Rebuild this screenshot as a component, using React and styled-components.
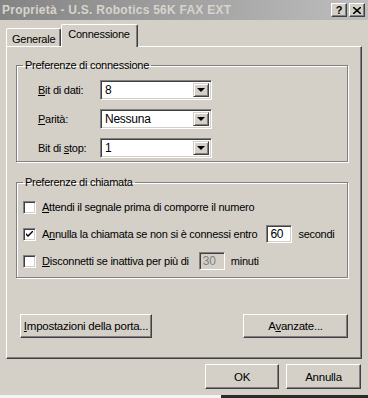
import React from "react";
import styled, { createGlobalStyle } from "styled-components";

const GlobalStyle = createGlobalStyle`
  html, body {
    margin: 0;
    padding: 0;
    background: #d4d0c8;
  }
  body {
    font-family: "Liberation Sans", Arial, sans-serif;
    font-size: 11px;
    letter-spacing: -0.25px;
    color: #000;
  }
`;

const Window = styled.div`
  width: 368px;
  height: 398px;
  display: flex;
  flex-direction: column;
  background: #d4d0c8;
  overflow: hidden;
`;

const TitleBar = styled.div`
  height: 20px;
  flex-shrink: 0;
  display: flex;
  align-items: center;
  justify-content: space-between;
  padding: 0 3px 0 2px;
  background: linear-gradient(to right, #848484, #bebebe);
`;

const Title = styled.span`
  font-weight: bold;
  font-size: 12px;
  letter-spacing: 0.25px;
  color: #d8d4cc;
`;

const TitleButtons = styled.div`
  display: flex;
  gap: 2px;
`;

const TitleButton = styled.div`
  width: 16px;
  height: 14px;
  box-sizing: border-box;
  background: #d4d0c8;
  border-top: 1px solid #fff;
  border-left: 1px solid #fff;
  border-right: 1px solid #404040;
  border-bottom: 1px solid #404040;
  box-shadow: inset -1px -1px 0 #808080;
  display: flex;
  align-items: center;
  justify-content: center;
  font-weight: bold;
  font-size: 11px;
  line-height: 1;
`;

const TabStrip = styled.div`
  display: flex;
  align-items: flex-end;
  height: 22px;
  padding: 4px 0 0 6px;
  flex-shrink: 0;
`;

const Tab = styled.div`
  position: relative;
  z-index: ${(p) => (p.$active ? 2 : 1)};
  height: ${(p) => (p.$active ? "23px" : "18px")};
  margin-bottom: ${(p) => (p.$active ? "-1px" : "0")};
  box-sizing: border-box;
  padding: ${(p) => (p.$active ? "2px 7px 0 6px" : "3px 5px 0 5px")};
  background: #d4d0c8;
  border-top: 1px solid #fff;
  border-left: 1px solid #fff;
  border-right: 1px solid #404040;
  border-top-left-radius: 2px;
  border-top-right-radius: 2px;
  box-shadow: inset -1px 0 0 #808080;
  line-height: 14px;
`;

const Panel = styled.div`
  margin: 0 6px;
  height: 313px;
  box-sizing: border-box;
  flex-shrink: 0;
  border-top: 1px solid #fff;
  border-left: 1px solid #fff;
  border-right: 1px solid #404040;
  border-bottom: 1px solid #404040;
  box-shadow: inset -1px -1px 0 #808080;
  padding: 11px 13px 0 9px;
  display: flex;
  flex-direction: column;
`;

const Group = styled.fieldset`
  margin: 0 0 ${(p) => p.$gap || 0}px 0;
  padding: ${(p) => p.$pad};
  height: ${(p) => p.$h}px;
  box-sizing: border-box;
  border: 1px solid #808080;
  box-shadow: 1px 1px 0 #fff, inset 1px 1px 0 #fff;
  min-width: 0;
`;

const Legend = styled.legend`
  margin-left: 6px;
  padding: 0 2px;
  line-height: 14px;
`;

const FieldGrid = styled.div`
  display: grid;
  grid-template-columns: 62px 112px;
  row-gap: 9px;
  align-items: center;
  padding-left: 21px;
`;

const Label = styled.span`
  white-space: nowrap;
`;

const Combo = styled.div`
  height: 20px;
  box-sizing: border-box;
  display: flex;
  background: #fff;
  border-top: 1px solid #808080;
  border-left: 1px solid #808080;
  border-right: 1px solid #fff;
  border-bottom: 1px solid #fff;
  box-shadow: inset 1px 1px 0 #404040, inset -1px -1px 0 #d4d0c8;
  padding: 2px;
`;

const ComboText = styled.span`
  flex: 1;
  padding-left: 2px;
  line-height: 14px;
  font-size: 12px;
`;

const ArrowButton = styled.div`
  width: 16px;
  box-sizing: border-box;
  background: #d4d0c8;
  border-top: 1px solid #d4d0c8;
  border-left: 1px solid #d4d0c8;
  border-right: 1px solid #404040;
  border-bottom: 1px solid #404040;
  box-shadow: inset 1px 1px 0 #fff, inset -1px -1px 0 #808080;
  display: flex;
  align-items: center;
  justify-content: center;
`;

const Triangle = styled.span`
  width: 0;
  height: 0;
  border-left: 4px solid transparent;
  border-right: 4px solid transparent;
  border-top: 4px solid #000;
`;

const CheckList = styled.div`
  display: flex;
  flex-direction: column;
  gap: 9px;
  padding-left: 6px;
`;

const CheckRow = styled.div`
  display: flex;
  align-items: center;
  height: 18px;
  white-space: nowrap;
`;

const Box = styled.span`
  width: 13px;
  height: 13px;
  box-sizing: border-box;
  flex-shrink: 0;
  background: #fff;
  border-top: 1px solid #808080;
  border-left: 1px solid #808080;
  border-right: 1px solid #fff;
  border-bottom: 1px solid #fff;
  box-shadow: inset 1px 1px 0 #404040, inset -1px -1px 0 #d4d0c8;
  display: flex;
  align-items: center;
  justify-content: center;
  margin-right: 6px;
`;

const SmallEdit = styled.span`
  width: 26px;
  height: 18px;
  box-sizing: border-box;
  margin: 0 6px 0 ${(p) => p.$ml}px;
  background: ${(p) => (p.$disabled ? "#d4d0c8" : "#fff")};
  color: ${(p) => (p.$disabled ? "#808080" : "#000")};
  border-top: 1px solid #808080;
  border-left: 1px solid #808080;
  border-right: 1px solid #fff;
  border-bottom: 1px solid #fff;
  box-shadow: inset 1px 1px 0 #404040, inset -1px -1px 0 #d4d0c8;
  padding: 1px 0 0 3px;
  line-height: 15px;
  font-size: 12px;
`;

const ButtonRow = styled.div`
  display: flex;
  justify-content: space-between;
  padding: ${(p) => p.$pad};
`;

const Button = styled.div`
  width: ${(p) => p.$w}px;
  height: ${(p) => p.$h || 24}px;
  box-sizing: border-box;
  background: #d4d0c8;
  border-top: 1px solid #fff;
  border-left: 1px solid #fff;
  border-right: 1px solid #404040;
  border-bottom: 1px solid #404040;
  box-shadow: inset -1px -1px 0 #808080;
  display: flex;
  align-items: center;
  justify-content: center;
  white-space: nowrap;
  font-size: 11.5px;
`;

const DialogButtons = styled.div`
  display: flex;
  justify-content: flex-end;
  gap: 7px;
  padding: 5px 7px 0 0;
  height: 25px;
`;

const BottomEdge = styled.div`
  margin-top: auto;
  height: 3px;
  display: flex;
`;

const EdgePart = styled.div`
  width: ${(p) => p.$w};
  flex: ${(p) => (p.$grow ? 1 : "none")};
  background: ${(p) => p.$c};
`;

const Check = () => (
  <svg width="7" height="7" viewBox="0 0 7 7">
    <path d="M0 2 L0 4 L2 6 L7 1 L7 -1 L2 4 Z" fill="#000" />
  </svg>
);

export default function App() {
  return (
    <>
      <GlobalStyle />
      <Window>
        <TitleBar>
          <Title>Proprietà - U.S. Robotics 56K FAX EXT</Title>
          <TitleButtons>
            <TitleButton>?</TitleButton>
            <TitleButton>
              <svg width="8" height="7" viewBox="0 0 8 7">
                <path d="M0 0 L8 7 M8 0 L0 7" stroke="#000" strokeWidth="1.6" />
              </svg>
            </TitleButton>
          </TitleButtons>
        </TitleBar>

        <TabStrip>
          <Tab>Generale</Tab>
          <Tab $active>Connessione</Tab>
        </TabStrip>

        <Panel>
          <Group $h={104} $pad="8px 0 0 0" $gap={13}>
            <Legend>Preferenze di connessione</Legend>
            <FieldGrid>
              <Label>
                <u>B</u>it di dati:
              </Label>
              <Combo>
                <ComboText>8</ComboText>
                <ArrowButton>
                  <Triangle />
                </ArrowButton>
              </Combo>
              <Label>
                <u>P</u>arità:
              </Label>
              <Combo>
                <ComboText>Nessuna</ComboText>
                <ArrowButton>
                  <Triangle />
                </ArrowButton>
              </Combo>
              <Label>
                Bit di <u>s</u>top:
              </Label>
              <Combo>
                <ComboText>1</ComboText>
                <ArrowButton>
                  <Triangle />
                </ArrowButton>
              </Combo>
            </FieldGrid>
          </Group>

          <Group $h={103} $pad="9px 0 0 0">
            <Legend>Preferenze di chiamata</Legend>
            <CheckList>
              <CheckRow>
                <Box />
                <span>
                  <u>A</u>ttendi il segnale prima di comporre il numero
                </span>
              </CheckRow>
              <CheckRow>
                <Box>
                  <Check />
                </Box>
                <span>
                  A<u>n</u>nulla la chiamata se non si è connessi entro
                </span>
                <SmallEdit $ml={9}>60</SmallEdit>
                <span>secondi</span>
              </CheckRow>
              <CheckRow>
                <Box />
                <span>
                  <u>D</u>isconnetti se inattiva per più di
                </span>
                <SmallEdit $ml={10} $disabled>
                  30
                </SmallEdit>
                <span>minuti</span>
              </CheckRow>
            </CheckList>
          </Group>

          <ButtonRow $pad="36px 0 0 4px">
            <Button $w={132}>
              <span>
                <u>I</u>mpostazioni della porta...
              </span>
            </Button>
            <Button $w={105}>
              <span>
                A<u>v</u>anzate...
              </span>
            </Button>
          </ButtonRow>
        </Panel>

        <DialogButtons>
          <Button $w={74} $h={25}>
            OK
          </Button>
          <Button $w={75} $h={25}>
            Annulla
          </Button>
        </DialogButtons>

        <BottomEdge>
          <EdgePart $w="221px" $c="#f4f4f4" />
          <EdgePart $grow $c="#2a2a2a" />
        </BottomEdge>
      </Window>
    </>
  );
}
